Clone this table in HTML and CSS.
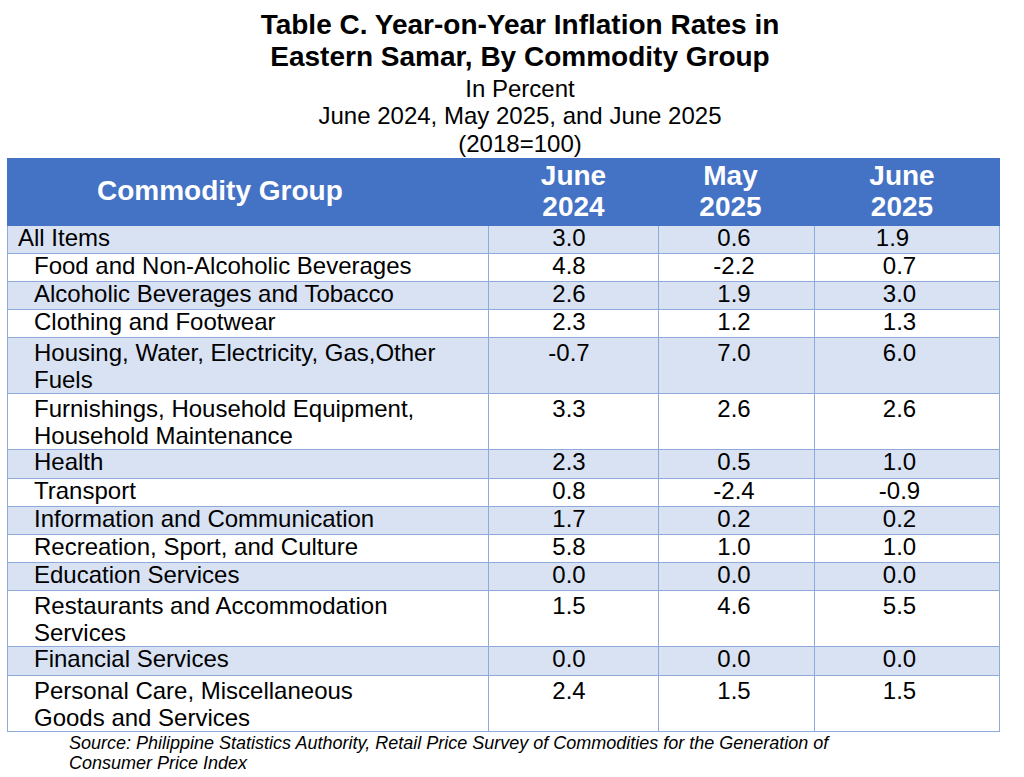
FILE: index.html
```html
<!DOCTYPE html>
<html lang="en">
<head>
<meta charset="utf-8">
<title>Table C. Year-on-Year Inflation Rates in Eastern Samar</title>
<link rel="stylesheet" href="styles.css">
</head>
<body>
<div class="page">
  <header class="caption">
    <h1 class="title">Table C. Year-on-Year Inflation Rates in<br>Eastern Samar, By Commodity Group</h1>
    <p class="subtitle">In Percent<br>June 2024, May 2025, and June 2025<br>(2018=100)</p>
  </header>
  <table class="grid">
    <colgroup>
      <col class="c-name">
      <col class="c-a">
      <col class="c-b">
      <col class="c-c">
    </colgroup>
    <thead>
      <tr>
        <th class="h-name">Commodity Group</th>
        <th class="h-a">June<br>2024</th>
        <th class="h-b">May<br>2025</th>
        <th class="h-c">June<br>2025</th>
      </tr>
    </thead>
    <tbody>
      <tr class="band"><td class="name top">All Items</td><td class="v-a">3.0</td><td class="v-b">0.6</td><td class="v-c top-c">1.9</td></tr>
      <tr><td class="name">Food and Non-Alcoholic Beverages</td><td class="v-a">4.8</td><td class="v-b">-2.2</td><td class="v-c">0.7</td></tr>
      <tr class="band"><td class="name">Alcoholic Beverages and Tobacco</td><td class="v-a">2.6</td><td class="v-b">1.9</td><td class="v-c">3.0</td></tr>
      <tr><td class="name">Clothing and Footwear</td><td class="v-a">2.3</td><td class="v-b">1.2</td><td class="v-c">1.3</td></tr>
      <tr class="band two"><td class="name">Housing, Water, Electricity, Gas,Other<br>Fuels</td><td class="v-a">-0.7</td><td class="v-b">7.0</td><td class="v-c">6.0</td></tr>
      <tr class="two"><td class="name">Furnishings, Household Equipment,<br>Household Maintenance</td><td class="v-a">3.3</td><td class="v-b">2.6</td><td class="v-c">2.6</td></tr>
      <tr class="band"><td class="name">Health</td><td class="v-a">2.3</td><td class="v-b">0.5</td><td class="v-c">1.0</td></tr>
      <tr><td class="name">Transport</td><td class="v-a">0.8</td><td class="v-b">-2.4</td><td class="v-c">-0.9</td></tr>
      <tr class="band"><td class="name">Information and Communication</td><td class="v-a">1.7</td><td class="v-b">0.2</td><td class="v-c">0.2</td></tr>
      <tr><td class="name">Recreation, Sport, and Culture</td><td class="v-a">5.8</td><td class="v-b">1.0</td><td class="v-c">1.0</td></tr>
      <tr class="band"><td class="name">Education Services</td><td class="v-a">0.0</td><td class="v-b">0.0</td><td class="v-c">0.0</td></tr>
      <tr class="two"><td class="name">Restaurants and Accommodation<br>Services</td><td class="v-a">1.5</td><td class="v-b">4.6</td><td class="v-c">5.5</td></tr>
      <tr class="band"><td class="name">Financial Services</td><td class="v-a">0.0</td><td class="v-b">0.0</td><td class="v-c">0.0</td></tr>
      <tr class="two"><td class="name">Personal Care, Miscellaneous<br>Goods and Services</td><td class="v-a">2.4</td><td class="v-b">1.5</td><td class="v-c">1.5</td></tr>
    </tbody>
  </table>
  <p class="source">Source: Philippine Statistics Authority, Retail Price Survey of Commodities for the Generation of<br>Consumer Price Index</p>
</div>
</body>
</html>
```

FILE: styles.css
```css
html, body {
  margin: 0;
  padding: 0;
  background: #ffffff;
}

body {
  font-family: "Liberation Sans", Arial, sans-serif;
  color: #000000;
}

.page {
  padding: 9px 0 0 7px;
  width: 1017px;
}

.caption {
  padding-left: 9px;
  text-align: center;
}

.title {
  margin: 0;
  font-size: 28px;
  font-weight: bold;
  line-height: 32px;
}

.subtitle {
  margin: 1.5px 0 0;
  font-size: 24px;
  line-height: 27.5px;
}

.grid {
  margin-top: 0.5px;
  width: 992px;
  border-collapse: collapse;
  table-layout: fixed;
  font-size: 24px;
}

.c-name { width: 481px; }
.c-a { width: 170px; }
.c-b { width: 156px; }
.c-c { width: 185px; }

.grid th {
  background: #4472c4;
  color: #ffffff;
  font-size: 28px;
  font-weight: bold;
  line-height: 31px;
  height: 64px;
  padding: 0 0 2px;
  border: 1px solid #4472c4;
  text-align: center;
  vertical-align: middle;
}

.grid th.h-name {
  text-align: left;
  padding-left: 89px;
}

.grid th.h-b { padding-right: 12px; }
.grid th.h-c { padding-right: 10px; }

.grid td {
  border: 1px solid #8eaadb;
  padding-top: 1px;
  padding-bottom: 5px;
  line-height: 21px;
  height: 21px;
  vertical-align: top;
  text-align: center;
  white-space: nowrap;
}

.grid tr.two td {
  line-height: 27px;
  padding-top: 1px;
  padding-bottom: 0;
  height: 54px;
}

.grid tr.two + tr:not(.two) td,
.grid tbody tr:last-child td {
  height: 22px;
}

.grid tr.band td {
  background: #d9e2f3;
}

.grid td.name {
  text-align: left;
  padding-left: 26px;
}

.grid td.name.top {
  padding-left: 10px;
}

.grid td.v-a { padding-right: 10px; }
.grid td.v-b { padding-right: 6px; }
.grid td.v-c { padding-right: 16px; }
.grid td.top-c { padding-right: 30px; }

.source {
  margin: 1px 0 0 62px;
  font-size: 18px;
  font-style: italic;
  line-height: 20px;
}
```
